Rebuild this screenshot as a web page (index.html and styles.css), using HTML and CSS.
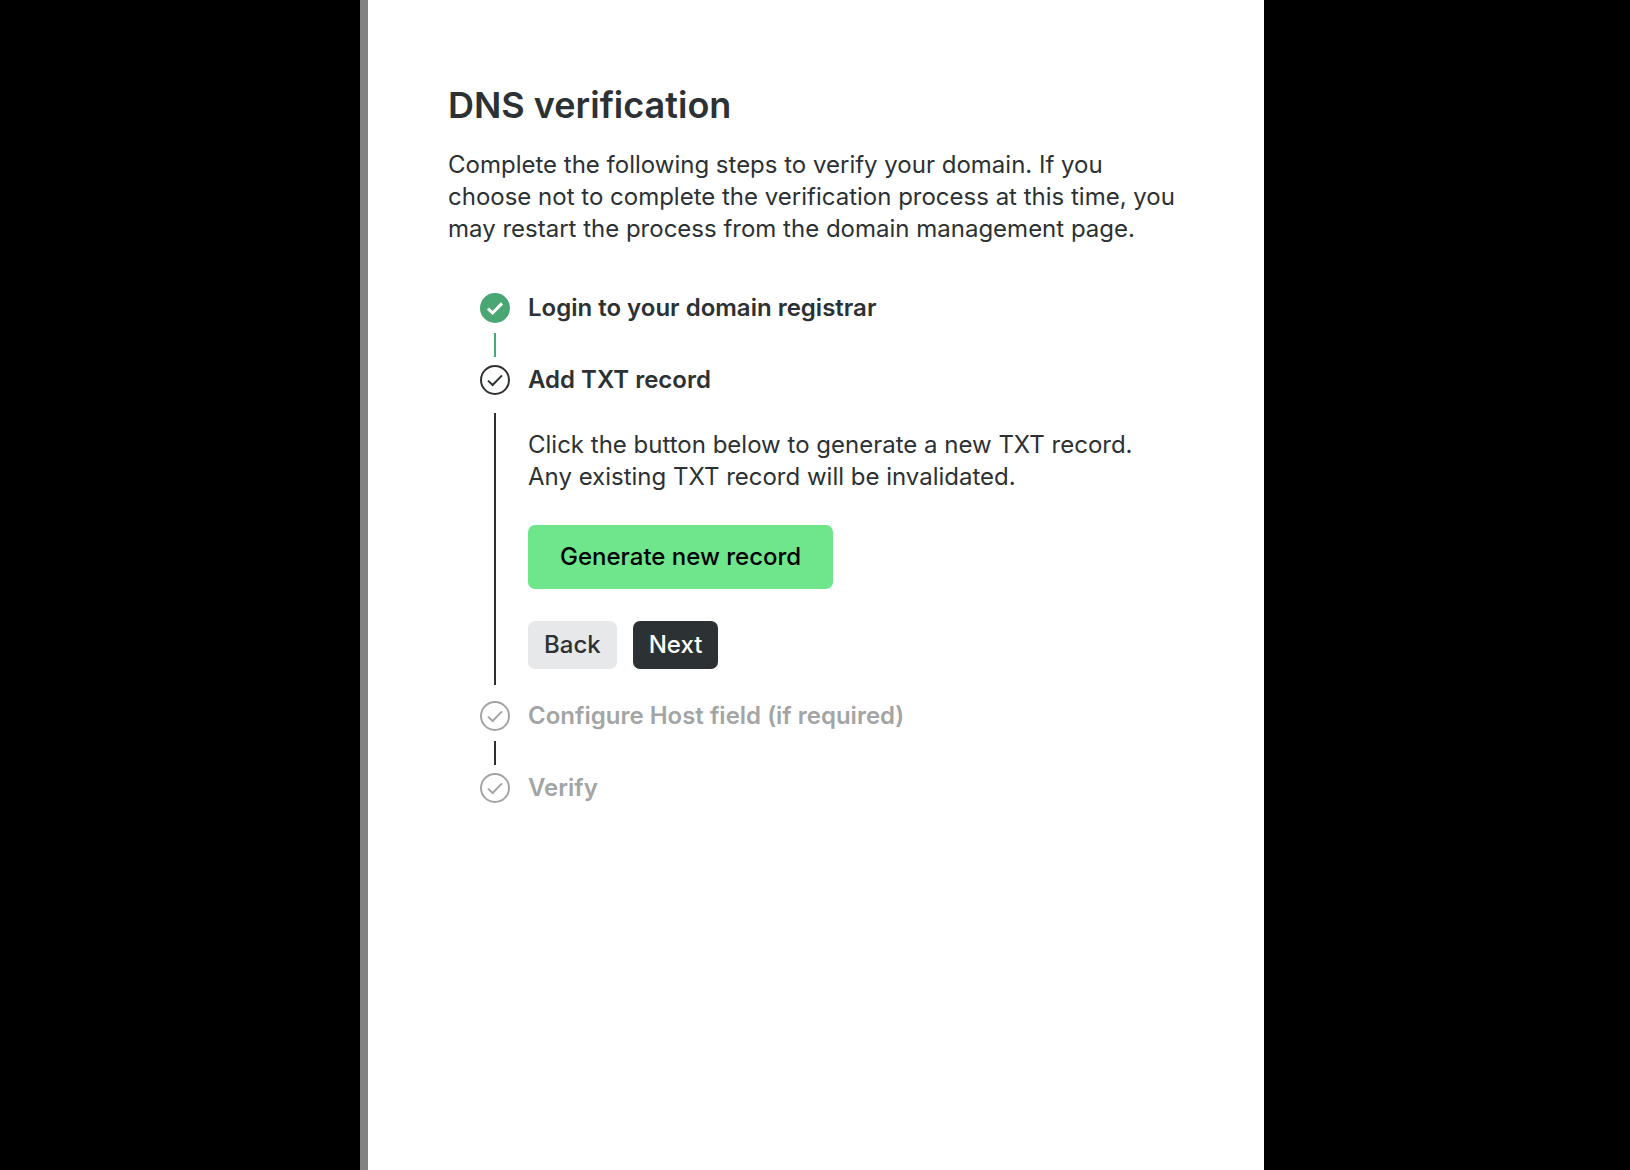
FILE: index.html
```html
<!DOCTYPE html>
<html lang="en">
<head>
<meta charset="utf-8">
<meta name="viewport" content="width=device-width, initial-scale=1">
<title>DNS verification</title>
<link rel="stylesheet" href="styles.css">
</head>
<body>
<svg class="sprite" aria-hidden="true">
  <symbol id="check" viewBox="0 0 30 30">
    <circle class="ring" cx="15" cy="15" r="14"/>
    <path class="tick" d="M8 15.6l4.6 4.4L22 10.4"/>
  </symbol>
</svg>
<main class="panel">
  <h1 class="title">DNS verification</h1>
  <p class="text intro">Complete the following steps to verify your domain. If you choose not to complete the verification process at this time, you may restart the process from the domain management page.</p>
  <ol class="steps">
    <li class="step done">
      <div class="head">
        <svg class="icon" aria-hidden="true"><use href="#check"/></svg>
        <h2 class="label">Login to your domain registrar</h2>
      </div>
      <div class="link"></div>
    </li>
    <li class="step">
      <div class="head">
        <svg class="icon" aria-hidden="true"><use href="#check"/></svg>
        <h2 class="label">Add TXT record</h2>
      </div>
      <div class="body">
        <p class="text">Click the button below to generate a new TXT record. Any existing TXT record will be invalidated.</p>
        <button class="btn generate" type="button">Generate new record</button>
        <div class="actions">
          <button class="btn back" type="button">Back</button>
          <button class="btn next" type="button">Next</button>
        </div>
      </div>
    </li>
    <li class="step pending">
      <div class="head">
        <svg class="icon" aria-hidden="true"><use href="#check"/></svg>
        <h2 class="label">Configure Host field (if required)</h2>
      </div>
      <div class="link"></div>
    </li>
    <li class="step pending">
      <div class="head">
        <svg class="icon" aria-hidden="true"><use href="#check"/></svg>
        <h2 class="label">Verify</h2>
      </div>
    </li>
  </ol>
</main>
</body>
</html>
```
FILE: styles.css
```css
* { box-sizing: border-box; }

body {
  margin: 0;
  min-height: 100vh;
  display: grid;
  grid-template-columns: 360fr 904fr 366fr;
  background: #000;
  color: #2c3134;
  font-family: Inter, "Liberation Sans", sans-serif;
  font-size: 24px;
  line-height: 32px;
}

h1, h2, p, ol { margin: 0; padding: 0; }

.sprite { position: absolute; width: 0; height: 0; }

.panel {
  grid-column: 2;
  padding: 81px 80px 80px;
  border-left: 8px solid #828282;
  background: #fff;
}

.title {
  font-size: 36px;
  line-height: 48px;
  font-weight: 600;
}

.intro { margin-top: 20px; }

.steps {
  margin-top: 47px;
  padding-left: 32px;
  list-style: none;
}

.head {
  display: flex;
  align-items: center;
  gap: 18px;
}

.icon {
  width: 30px;
  height: 30px;
  flex: none;
  fill: none;
  stroke: #2c3134;
  stroke-width: 2;
}

.label {
  font-size: 24px;
  line-height: 32px;
  font-weight: 600;
}

.done .icon {
  --tick: #fff;
  --tick-width: 3;
  fill: #4aa672;
  stroke: #4aa672;
}

.tick {
  fill: none;
  stroke: var(--tick, inherit);
  stroke-width: var(--tick-width, 2);
}

.pending .icon { stroke: #a3a5a5; }
.pending .label { color: #a3a5a5; }

.link {
  width: 2px;
  height: 24px;
  margin: 9px 0 7px 14px;
  background: #2c3134;
}

.done .link { background: #4aa672; }

.body {
  display: flex;
  flex-direction: column;
  align-items: flex-start;
  gap: 32px;
  margin: 17px 0 15px 14px;
  padding: 16px 32px;
  border-left: 2px solid #2c3134;
}

.actions { display: flex; gap: 16px; }

.btn {
  height: 48px;
  padding: 0 16px;
  border: 0;
  border-radius: 7px;
  font: inherit;
  font-weight: 500;
  cursor: pointer;
}

.generate {
  height: 64px;
  padding: 0 32px;
  background: #6fe58c;
  color: #000;
}

.back { background: #e7e8e9; color: #2c3134; }
.next { background: #2c3134; color: #fff; }
```
